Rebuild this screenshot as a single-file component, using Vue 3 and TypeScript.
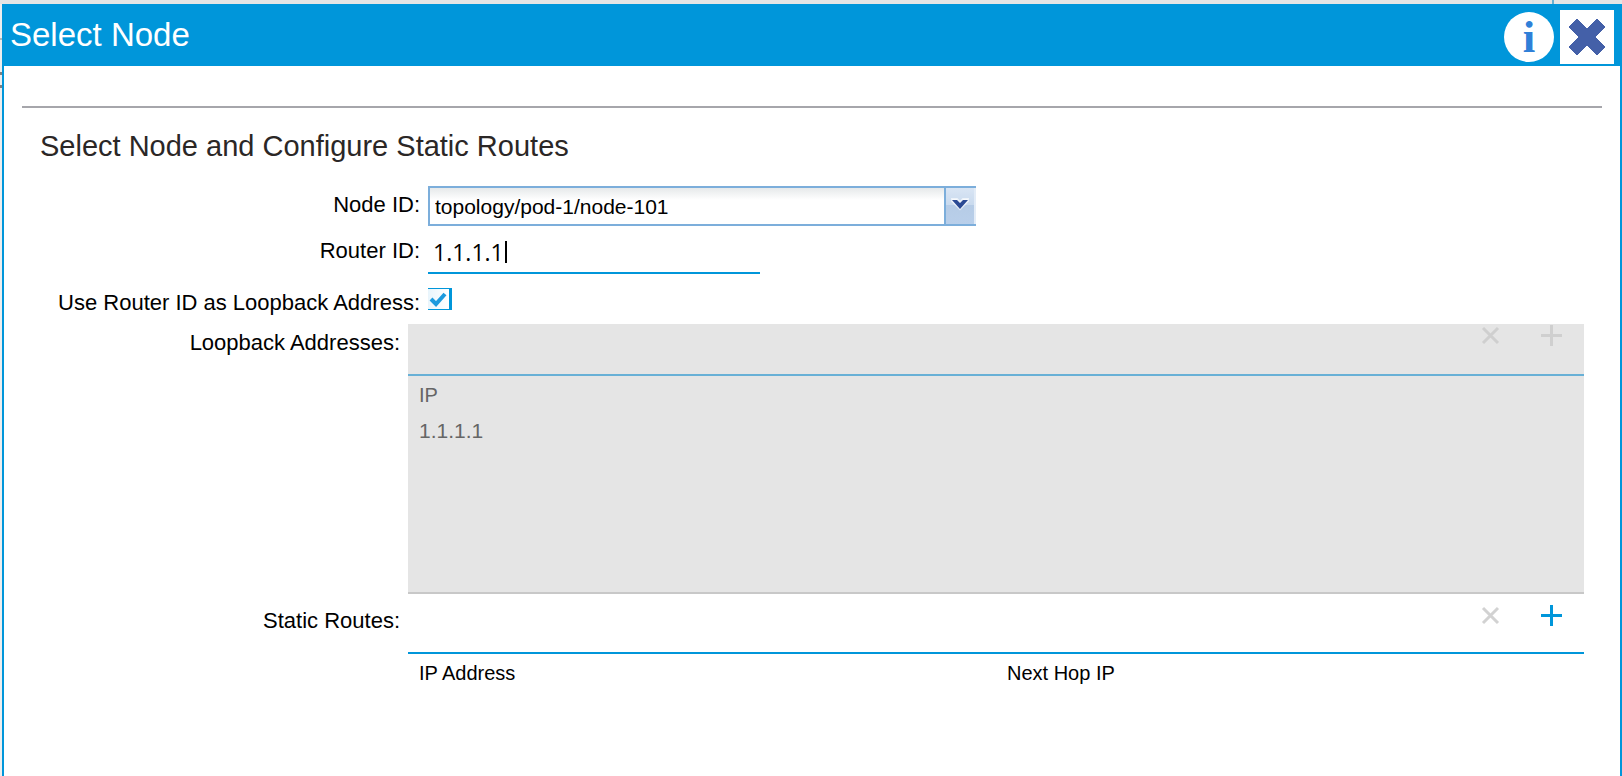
<script setup lang="ts">
import { ref } from 'vue'

interface StaticRoute {
  address: string
  nextHop: string
}

const nodes: string[] = ['topology/pod-1/node-101']
const nodeId = ref(nodes[0])
const routerId = ref('1.1.1.1')
const useAsLoopback = ref(true)
const loopbacks = ref<string[]>(['1.1.1.1'])
const routes = ref<StaticRoute[]>([])
</script>

<template>
  <div class="page">
    <div class="page-edge"></div>
    <main class="dialog">
      <header class="titlebar">
        <h1>Select Node</h1>
        <button class="info" type="button"><span>i</span></button>
        <button class="close" type="button" aria-label="Close">
          <svg viewBox="0 0 54 54" width="54" height="54">
            <path
              d="M17 9 L27 19 L37 9 L45 17 L35 27 L45 37 L37 45 L27 35 L17 45 L9 37 L19 27 L9 17 Z"
              fill="#4460a8"
              stroke="#4460a8"
              stroke-width="1"
              stroke-linejoin="round"
            />
          </svg>
        </button>
      </header>

      <div class="body">
        <hr />
        <form class="form" @submit.prevent>
          <h2>Select Node and Configure Static Routes</h2>

          <div class="row row-node">
            <label for="node">Node ID:</label>
            <div class="combo">
              <select id="node" v-model="nodeId">
                <option v-for="n in nodes" :key="n" :value="n">{{ n }}</option>
              </select>
              <span class="trigger">
                <svg viewBox="0 0 28 36" width="28" height="36">
                  <path
                    d="M6 11 H11 L14 14 L17 11 H22 V13 L14 21 L6 13 Z"
                    fill="#fff"
                    fill-opacity="0.6"
                    stroke="#fff"
                    stroke-opacity="0.6"
                    stroke-width="2"
                  />
                  <path d="M6 12 H11 L14 15 L17 12 H22 L14 21 Z" fill="#2b4a94" />
                </svg>
              </span>
            </div>
          </div>

          <div class="row row-router">
            <label for="router">Router ID:</label>
            <div class="entry">
              <input id="router" v-model="routerId" type="text" />
              <span class="caret"></span>
            </div>
          </div>

          <div class="row row-check">
            <label for="loop">Use Router ID as Loopback Address:</label>
            <div class="check">
              <input id="loop" v-model="useAsLoopback" type="checkbox" />
              <svg v-if="useAsLoopback" viewBox="0 0 20 20" width="20" height="20">
                <path d="M3 10 L8 15 L17 5" fill="none" stroke="#1c9ade" stroke-width="4" />
              </svg>
            </div>
          </div>

          <div class="row row-loopbacks">
            <label id="loopbacks-label">Loopback Addresses:</label>
            <section class="grid disabled" aria-labelledby="loopbacks-label">
              <div class="tools">
                <button type="button" disabled aria-label="Delete">
                  <svg viewBox="0 0 21 21" width="21" height="21">
                    <path d="M3 3 L18 18 M18 3 L3 18" stroke="currentColor" stroke-width="3" />
                  </svg>
                </button>
                <button type="button" disabled aria-label="Add">
                  <svg viewBox="0 0 21 21" width="21" height="21">
                    <path d="M0 10.5 H21 M10.5 0 V21" stroke="currentColor" stroke-width="3" />
                  </svg>
                </button>
              </div>
              <table>
                <thead>
                  <tr><th>IP</th></tr>
                </thead>
                <tbody>
                  <tr v-for="ip in loopbacks" :key="ip"><td>{{ ip }}</td></tr>
                </tbody>
              </table>
            </section>
          </div>

          <div class="row row-routes">
            <label id="routes-label">Static Routes:</label>
            <section class="grid" aria-labelledby="routes-label">
              <div class="tools">
                <button type="button" disabled aria-label="Delete">
                  <svg viewBox="0 0 21 21" width="21" height="21">
                    <path d="M3 3 L18 18 M18 3 L3 18" stroke="currentColor" stroke-width="3" />
                  </svg>
                </button>
                <button type="button" aria-label="Add">
                  <svg viewBox="0 0 21 21" width="21" height="21">
                    <path d="M0 10.5 H21 M10.5 0 V21" stroke="currentColor" stroke-width="3" />
                  </svg>
                </button>
              </div>
              <table>
                <thead>
                  <tr><th>IP Address</th><th>Next Hop IP</th></tr>
                </thead>
                <tbody>
                  <tr v-for="r in routes" :key="r.address">
                    <td>{{ r.address }}</td>
                    <td>{{ r.nextHop }}</td>
                  </tr>
                </tbody>
              </table>
            </section>
          </div>
        </form>
      </div>
    </main>
  </div>
</template>

<style>
body {
  margin: 0;
  background: #e5e5e5;
}
</style>

<style scoped>
.page {
  box-sizing: border-box;
  min-height: 100vh;
  display: flex;
  flex-direction: column;
  padding-left: 2px;
  background:
    linear-gradient(#b8b8b8, #b8b8b8) 0 38px / 2px 2px no-repeat,
    linear-gradient(#808080, #808080) 0 72px / 2px 3px no-repeat,
    linear-gradient(#808080, #808080) 0 85px / 2px 3px no-repeat,
    #eeeeee;
  font-family: "Liberation Sans", Arial, sans-serif;
  color: #000;
}
.page-edge {
  height: 4px;
  margin-left: -2px;
  background: linear-gradient(#6ab0d0, #6ab0d0) calc(100% - 68px) 0 / 2px 4px no-repeat, #e5e5e5;
}
.dialog {
  flex: 1;
  display: flex;
  flex-direction: column;
}
.titlebar {
  display: flex;
  align-items: center;
  box-sizing: border-box;
  height: 62px;
  padding: 4px 8px 0;
  background: #0096da;
  color: #fff;
}
h1 {
  flex: 1;
  align-self: flex-start;
  margin: 0;
  font-size: 33px;
  font-weight: 400;
  line-height: 54px;
}
button {
  display: block;
  padding: 0;
  border: 0;
  background: none;
}
svg {
  display: block;
}
.info {
  width: 50px;
  height: 50px;
  margin-right: 6px;
  border-radius: 50%;
  background: #fff;
  color: #2f80d8;
  font: 700 45px/50px "Liberation Serif", "Times New Roman", serif;
}
.info span {
  display: block;
}
.close {
  width: 54px;
  height: 54px;
  background: #fff;
}
.body {
  flex: 1;
  padding: 40px 18px 0;
  border: solid #0096da;
  border-width: 0 2px;
  background: #fff;
}
hr {
  height: 2px;
  margin: 0;
  border: 0;
  background: #a6a6ab;
}
.form {
  padding: 21px 18px 0;
}
h2 {
  margin: 0 0 23px;
  color: #2b2726;
  font-size: 29px;
  font-weight: 400;
  line-height: 34px;
}
.row {
  display: flex;
  align-items: flex-start;
  gap: 8px;
  margin-bottom: 14px;
}
label {
  flex: none;
  width: 380px;
  font-size: 22px;
  line-height: 24px;
  text-align: right;
  white-space: nowrap;
}
.row-node label {
  margin-top: 7px;
}
.row-router label {
  margin-top: -1px;
}
.row-check label {
  margin-top: 3px;
  margin-bottom: -5px;
}
.row-loopbacks label {
  width: 360px;
  margin-top: 7px;
}
.row-routes label {
  width: 360px;
  margin-top: 15px;
}
.row-loopbacks {
  margin-bottom: 0;
}
.combo {
  display: flex;
  box-sizing: border-box;
  width: 548px;
  height: 40px;
  border: solid #7caedb;
  border-width: 2px 0 2px 2px;
}
select {
  flex: 1;
  height: 36px;
  padding: 2px 4px 0 5px;
  border: 0;
  border-right: 2px solid #7caedb;
  border-radius: 0;
  appearance: none;
  outline: 0;
  background: linear-gradient(#e6e9ea, #fff 12px);
  color: #000;
  font: 21px/28px "Liberation Sans", Arial, sans-serif;
}
.trigger {
  width: 28px;
  border-right: 2px solid #e3ecf7;
  background: linear-gradient(#d9e5f4, #c9daee 17px, #b6cce6 17px, #b9cfea);
}
.entry {
  display: flex;
  align-items: center;
  box-sizing: border-box;
  width: 332px;
  height: 34px;
  padding: 0 0 8px 5px;
  border-bottom: 2px solid #0096da;
}
.entry input {
  field-sizing: content;
  height: 28px;
  padding: 0;
  border: 0;
  outline: 0;
  background: transparent;
  caret-color: transparent;
  color: #000;
  font: 23px/28px "Open Sans", sans-serif;
}
.caret {
  width: 2px;
  height: 22px;
  margin-left: 1px;
  background: #000;
}
.check {
  display: grid;
  width: 24px;
  height: 22px;
}
.check input,
.check svg {
  grid-area: 1 / 1;
}
.check input {
  box-sizing: border-box;
  width: 24px;
  height: 22px;
  margin: 0;
  border: solid #0096da;
  border-width: 1px 3px 1px 0;
  appearance: none;
  background: linear-gradient(90deg, #e9f5fc, #fff);
}
.check svg {
  margin-top: 1px;
  pointer-events: none;
}
.grid {
  flex: 1;
  box-sizing: border-box;
}
.tools {
  display: flex;
  justify-content: flex-end;
  gap: 40px;
  box-sizing: border-box;
  height: 60px;
  padding: 11px 22px 0 0;
  border-bottom: 2px solid #0096da;
  color: #0096da;
}
.tools button {
  height: 21px;
  color: #0096da;
}
.tools button:disabled {
  color: #d2d2d2;
}
.disabled {
  min-height: 270px;
  border-bottom: 2px solid #c8c8c8;
  background: #e5e5e5;
  color: #666;
}
.disabled .tools {
  height: 52px;
  padding-top: 1px;
  border-color: #68b0d6;
}
.disabled .tools button:disabled {
  color: #cfcfcf;
}
table {
  width: 100%;
  table-layout: fixed;
  border-collapse: collapse;
}
th,
td {
  padding: 7px 11px 12px;
  font-size: 20px;
  font-weight: 400;
  line-height: 24px;
  text-align: left;
}
td {
  padding-top: 0;
  font-size: 21px;
}
</style>
